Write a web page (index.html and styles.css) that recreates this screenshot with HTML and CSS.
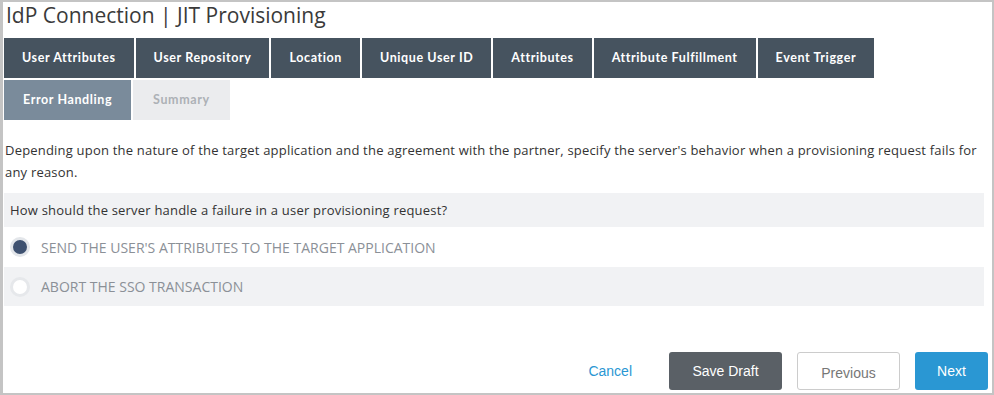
FILE: index.html
```html
<!DOCTYPE html>
<html lang="en">
<head>
  <meta charset="UTF-8" />
  <title>IdP Connection | JIT Provisioning</title>
  <link rel="stylesheet" href="styles.css">
</head>
<body>
  <div class="frame">
    <h1 class="title">IdP Connection | JIT Provisioning</h1>

    <div class="tabs">
      <div class="tab">User Attributes</div>
      <div class="tab">User Repository</div>
      <div class="tab">Location</div>
      <div class="tab">Unique User ID</div>
      <div class="tab">Attributes</div>
      <div class="tab">Attribute Fulfillment</div>
      <div class="tab">Event Trigger</div>
      <div class="tab active">Error Handling</div>
      <div class="tab disabled">Summary</div>
    </div>

    <p class="desc">Depending upon the nature of the target application and the agreement with the partner, specify the server's behavior when a provisioning request fails for any reason.</p>

    <div class="question">How should the server handle a failure in a user provisioning request?</div>

    <div class="options">
      <label class="option">
        <span class="radio checked"></span>
        <span class="option-label">SEND THE USER'S ATTRIBUTES TO THE TARGET APPLICATION</span>
      </label>
      <label class="option alt">
        <span class="radio"></span>
        <span class="option-label">ABORT THE SSO TRANSACTION</span>
      </label>
    </div>

    <div class="footer">
      <a href="#" class="cancel">Cancel</a>
      <button class="btn btn-dark">Save Draft</button>
      <button class="btn btn-outline">Previous</button>
      <button class="btn btn-primary">Next</button>
    </div>
  </div>
</body>
</html>
```

FILE: styles.css
```css
* {
  margin: 0;
  padding: 0;
  box-sizing: border-box;
}
body {
  background: #ffffff;
  font-family: 'Open Sans', sans-serif;
  color: #333333;
}
.frame {
  width: 994px;
  height: 395px;
  border: 2px solid #c4c4c4;
  border-left-width: 3px;
  padding: 0 8px 3px 1px;
  display: flex;
  flex-direction: column;
}
.title {
  font-size: 21px;
  font-weight: 400;
  line-height: 26px;
  color: #3a3a3a;
  padding-left: 2px;
  margin-bottom: 10px;
}
.tabs {
  display: flex;
  flex-wrap: wrap;
  gap: 2px;
  width: 900px;
}
.tab {
  height: 40px;
  line-height: 40px;
  padding: 0 18px;
  background: #46535f;
  color: #ffffff;
  font-family: 'Lato', sans-serif;
  font-size: 12.5px;
  font-weight: 700;
  letter-spacing: 0.6px;
}
.tab.active {
  background: #7a8b9b;
  padding: 0 19px;
}
.tab.disabled {
  background: #ebecee;
  color: #adb1b6;
  padding: 0 20px;
}
.desc {
  margin-top: 19px;
  font-size: 13px;
  line-height: 22px;
  letter-spacing: 0.2px;
  padding-left: 1px;
}
.question {
  margin-top: 10px;
  background: #f1f2f4;
  height: 34px;
  line-height: 34px;
  font-size: 13px;
  letter-spacing: 0.2px;
  padding-left: 6px;
}
.option {
  display: flex;
  align-items: center;
  height: 40px;
  padding-left: 6px;
}
.option.alt {
  background: #f1f2f4;
  height: 39px;
}
.radio {
  width: 20px;
  height: 20px;
  border-radius: 50%;
  border: 3px solid #e6e8eb;
  background: #ffffff;
  margin-right: 11px;
}
.radio.checked {
  background: #3e5170;
  border-color: #e3e6ea;
}
.option-label {
  font-size: 14px;
  color: #8b9097;
}
.footer {
  margin-top: auto;
  margin-right: -4px;
  display: flex;
  align-items: center;
  justify-content: flex-end;
  gap: 15px;
}
.cancel {
  font-family: 'Liberation Sans', Arial, sans-serif;
  font-size: 14px;
  color: #2a97d3;
  text-decoration: none;
  margin-right: 22px;
}
.btn {
  font-family: 'Liberation Sans', Arial, sans-serif;
  font-size: 14px;
  height: 38px;
  border-radius: 3px;
  border: 1px solid transparent;
  cursor: pointer;
}
.btn-dark {
  width: 113px;
  background: #5a6066;
  color: #ffffff;
}
.btn-outline {
  width: 103px;
  background: #ffffff;
  border-color: #cccccc;
  color: #777777;
  padding-top: 3px;
}
.btn-primary {
  width: 73px;
  background: #2a97d3;
  color: #ffffff;
}
```
